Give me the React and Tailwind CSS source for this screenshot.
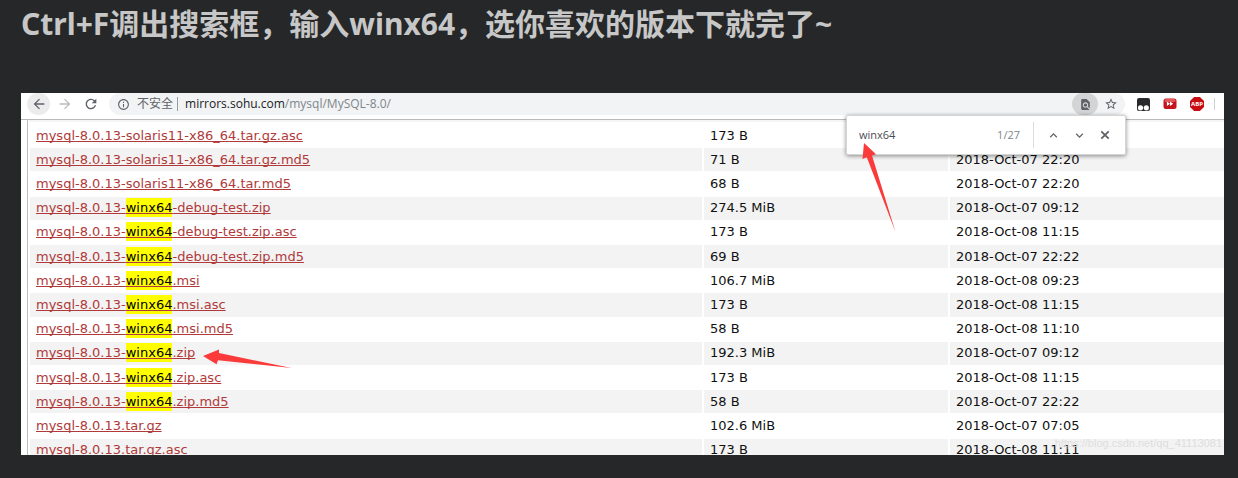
import {
  MdArrowBack,
  MdArrowForward,
  MdRefresh,
  MdInfoOutline,
  MdFindInPage,
  MdStarBorder,
  MdKeyboardArrowUp,
  MdKeyboardArrowDown,
} from "react-icons/md";

const files = [
  ["mysql-8.0.13-solaris11-x86_64.tar.gz.asc", "173 B", ""],
  ["mysql-8.0.13-solaris11-x86_64.tar.gz.md5", "71 B", "2018-Oct-07 22:20"],
  ["mysql-8.0.13-solaris11-x86_64.tar.md5", "68 B", "2018-Oct-07 22:20"],
  ["mysql-8.0.13-winx64-debug-test.zip", "274.5 MiB", "2018-Oct-07 09:12"],
  ["mysql-8.0.13-winx64-debug-test.zip.asc", "173 B", "2018-Oct-08 11:15"],
  ["mysql-8.0.13-winx64-debug-test.zip.md5", "69 B", "2018-Oct-07 22:22"],
  ["mysql-8.0.13-winx64.msi", "106.7 MiB", "2018-Oct-08 09:23"],
  ["mysql-8.0.13-winx64.msi.asc", "173 B", "2018-Oct-08 11:15"],
  ["mysql-8.0.13-winx64.msi.md5", "58 B", "2018-Oct-08 11:10"],
  ["mysql-8.0.13-winx64.zip", "192.3 MiB", "2018-Oct-07 09:12"],
  ["mysql-8.0.13-winx64.zip.asc", "173 B", "2018-Oct-08 11:15"],
  ["mysql-8.0.13-winx64.zip.md5", "58 B", "2018-Oct-07 22:22"],
  ["mysql-8.0.13.tar.gz", "102.6 MiB", "2018-Oct-07 07:05"],
  ["mysql-8.0.13.tar.gz.asc", "173 B", "2018-Oct-08 11:11"],
];

const TERM = "winx64";
const POINTED = "mysql-8.0.13-winx64.zip";

function FileName({ name }) {
  const at = name.indexOf(TERM);
  if (at < 0) return name;
  return (
    <>
      {name.slice(0, at)}
      <mark className="bg-[#ffff00] py-[2px] text-black underline decoration-[#b03a3a] [text-decoration-skip-ink:none]">{TERM}</mark>
      {name.slice(at + TERM.length)}
    </>
  );
}

function Toolbar() {
  return (
    <div className="flex items-start border-b border-[#b9b9b9] bg-white pb-1 pl-[6px] text-[#5f6368]">
      <button aria-label="Back" className="flex h-[22px] w-[23px] items-center justify-center rounded-full bg-[#ececed]">
        <MdArrowBack size={16} />
      </button>
      <button aria-label="Forward" className="ml-[3px] flex h-[22px] w-[23px] items-center justify-center text-[#babcbe]">
        <MdArrowForward size={16} />
      </button>
      <button aria-label="Reload" className="ml-[3px] flex h-[22px] w-[23px] items-center justify-center">
        <MdRefresh size={16} />
      </button>
      <div className="ml-[7px] flex h-[22px] flex-1 items-center rounded-full bg-[#f1f3f4] pl-2">
        <MdInfoOutline size={13} />
        <span className="ml-[7px] border-r border-[#9a9da0] pr-1 text-[12px] leading-[14px]">不安全</span>
        <div role="textbox" aria-label="Address" className="ml-[7px] flex-1 font-['Open_Sans',sans-serif] text-[12px] leading-[14px]">
          <span className="text-[#202124]">mirrors.sohu.com</span>
          <span className="text-[#80868b]">/mysql/MySQL-8.0/</span>
        </div>
        <button aria-label="Find in page" className="flex h-[22px] w-[26px] items-center justify-center rounded-full bg-[#d3d4d5]">
          <MdFindInPage size={13} />
        </button>
        <button aria-label="Bookmark this page" className="mr-[7px] ml-[6px]">
          <MdStarBorder size={14} />
        </button>
      </div>
      <div className="flex h-[22px] items-center gap-[13px] pr-[9px] pl-3">
        <button aria-label="Tampermonkey">
          <svg width="13" height="13" viewBox="0 0 13 13">
            <path d="M2 0h9q2 0 2 2v9q0 2-2 2H2q-2 0-2-2V2q0-2 2-2z" fill="#2a2a2c" />
            <circle cx="3.5" cy="9.8" r="2.6" fill="#fff" />
            <circle cx="9.3" cy="9.8" r="2.6" fill="#fff" />
          </svg>
        </button>
        <button aria-label="Speed">
          <svg width="14" height="12" viewBox="0 0 14 12">
            <rect x="0.5" y="0.5" width="13" height="10.5" rx="2.5" fill="#c4151c" />
            <rect x="1.5" y="1" width="11" height="3" rx="1.5" fill="#e0565b" />
            <path d="M3.9 3.6 7 5.8 3.9 8zM7 3.6l3.2 2.2L7 8z" fill="#fff" />
          </svg>
        </button>
        <button aria-label="Adblock Plus">
          <svg width="14" height="14" viewBox="0 0 14 14">
            <path d="M4.1 0h5.8L14 4.1v5.8L9.9 14H4.1L0 9.9V4.1z" fill="#c70d12" />
            <text x="7" y="9.3" textAnchor="middle" fontSize="6" fontWeight="700" fill="#fff" fontFamily="Open Sans, sans-serif">
              ABP
            </text>
          </svg>
        </button>
        <span className="-ml-[3px] h-3 w-px bg-[#cfd0d2]" />
      </div>
    </div>
  );
}

function FindBar() {
  return (
    <div className="absolute top-[22px] right-[98px] flex h-10 w-[280px] items-center rounded-[2px] border border-[#d5d5d5] bg-white pr-[7px] pl-3 text-[#5f6368] shadow-[0_1px_4px_rgba(0,0,0,0.45)]">
      <input
        aria-label="Find in page"
        defaultValue="winx64"
        className="w-0 min-w-0 flex-1 bg-transparent font-['Open_Sans',sans-serif] text-[11px] leading-4 text-[#4a4c50] outline-none"
      />
      <span className="font-['Open_Sans',sans-serif] text-[11px] leading-4 text-[#80868b]">1/27</span>
      <span className="mr-[6px] ml-[13px] h-[26px] w-px bg-[#dadce0]" />
      <button aria-label="Previous match" className="flex w-[26px] justify-center"><MdKeyboardArrowUp size={15} /></button>
      <button aria-label="Next match" className="flex w-[26px] justify-center"><MdKeyboardArrowDown size={15} /></button>
      <button aria-label="Close find bar" className="flex w-[26px] justify-center">
        <svg width="10" height="10" viewBox="0 0 10 10" fill="none" stroke="currentColor" strokeWidth="1.8">
          <path d="M1.3 1.3 8.7 8.7M8.7 1.3 1.3 8.7" />
        </svg>
      </button>
      <svg className="absolute top-[26px] left-[14px]" width="36" height="92" viewBox="0 0 36 92" aria-hidden="true">
        <path d="M3 1 15 12.2 11 13.6 34.5 90 5.8 15.3 1.5 17z" fill="#fb3a3a" />
      </svg>
    </div>
  );
}

export default function App() {
  return (
    <main className="min-h-screen bg-[#262729] pr-[14px] pl-[21px] font-['Noto_Sans','Noto_Sans_CJK_SC',sans-serif]">
      <h1 className="pt-1 text-[30px] leading-10 font-bold text-[#c7c7c7]">
        Ctrl+F调出搜索框，输入winx64，选你喜欢的版本下就完了~
      </h1>
      <section className="relative mt-[49px] bg-white">
        <Toolbar />
        <div className="h-[335px] overflow-hidden pl-[6px]">
          <div className="border-l border-[#bdbdbd]">
            <div className="ml-px h-[3px] border-b border-white bg-[#f5f5f5]" />
            <table className="h-[340px] w-[calc(100%+2px)] table-fixed border-separate border-spacing-x-[2px] border-spacing-y-px font-['DejaVu_Sans',sans-serif] text-[13px] leading-[17px]">
              <colgroup>
                <col />
                <col className="w-[244px]" />
                <col className="w-[274px]" />
              </colgroup>
              <tbody>
                {files.map(([name, size, date]) => (
                  <tr key={name} className="odd:bg-white even:bg-[#f3f3f3]">
                    <td className="p-0 pb-px pl-[6px]">
                      <a href="#" className="relative text-[#b03a3a] underline [text-decoration-skip-ink:none]">
                        <FileName name={name} />
                        {name === POINTED && (
                          <svg className="absolute top-[3px] left-full ml-2" width="90" height="22" viewBox="0 0 90 22" aria-hidden="true">
                            <path d="M0 8 16 1.5 16 5 88.5 20 15 12.2 13.5 16.3z" fill="#fb3a3a" />
                          </svg>
                        )}
                      </a>
                    </td>
                    <td className="p-0 pb-px pl-[6px] text-[#111]">{size}</td>
                    <td className="p-0 pb-px pl-[6px] text-[#111]">{date}</td>
                  </tr>
                ))}
              </tbody>
            </table>
          </div>
        </div>
        <FindBar />
        <span className="absolute right-[2px] bottom-1 font-['Liberation_Sans',sans-serif] text-[11px] leading-4 text-[#dedede]">
          https://blog.csdn.net/qq_41113081
        </span>
      </section>
    </main>
  );
}
